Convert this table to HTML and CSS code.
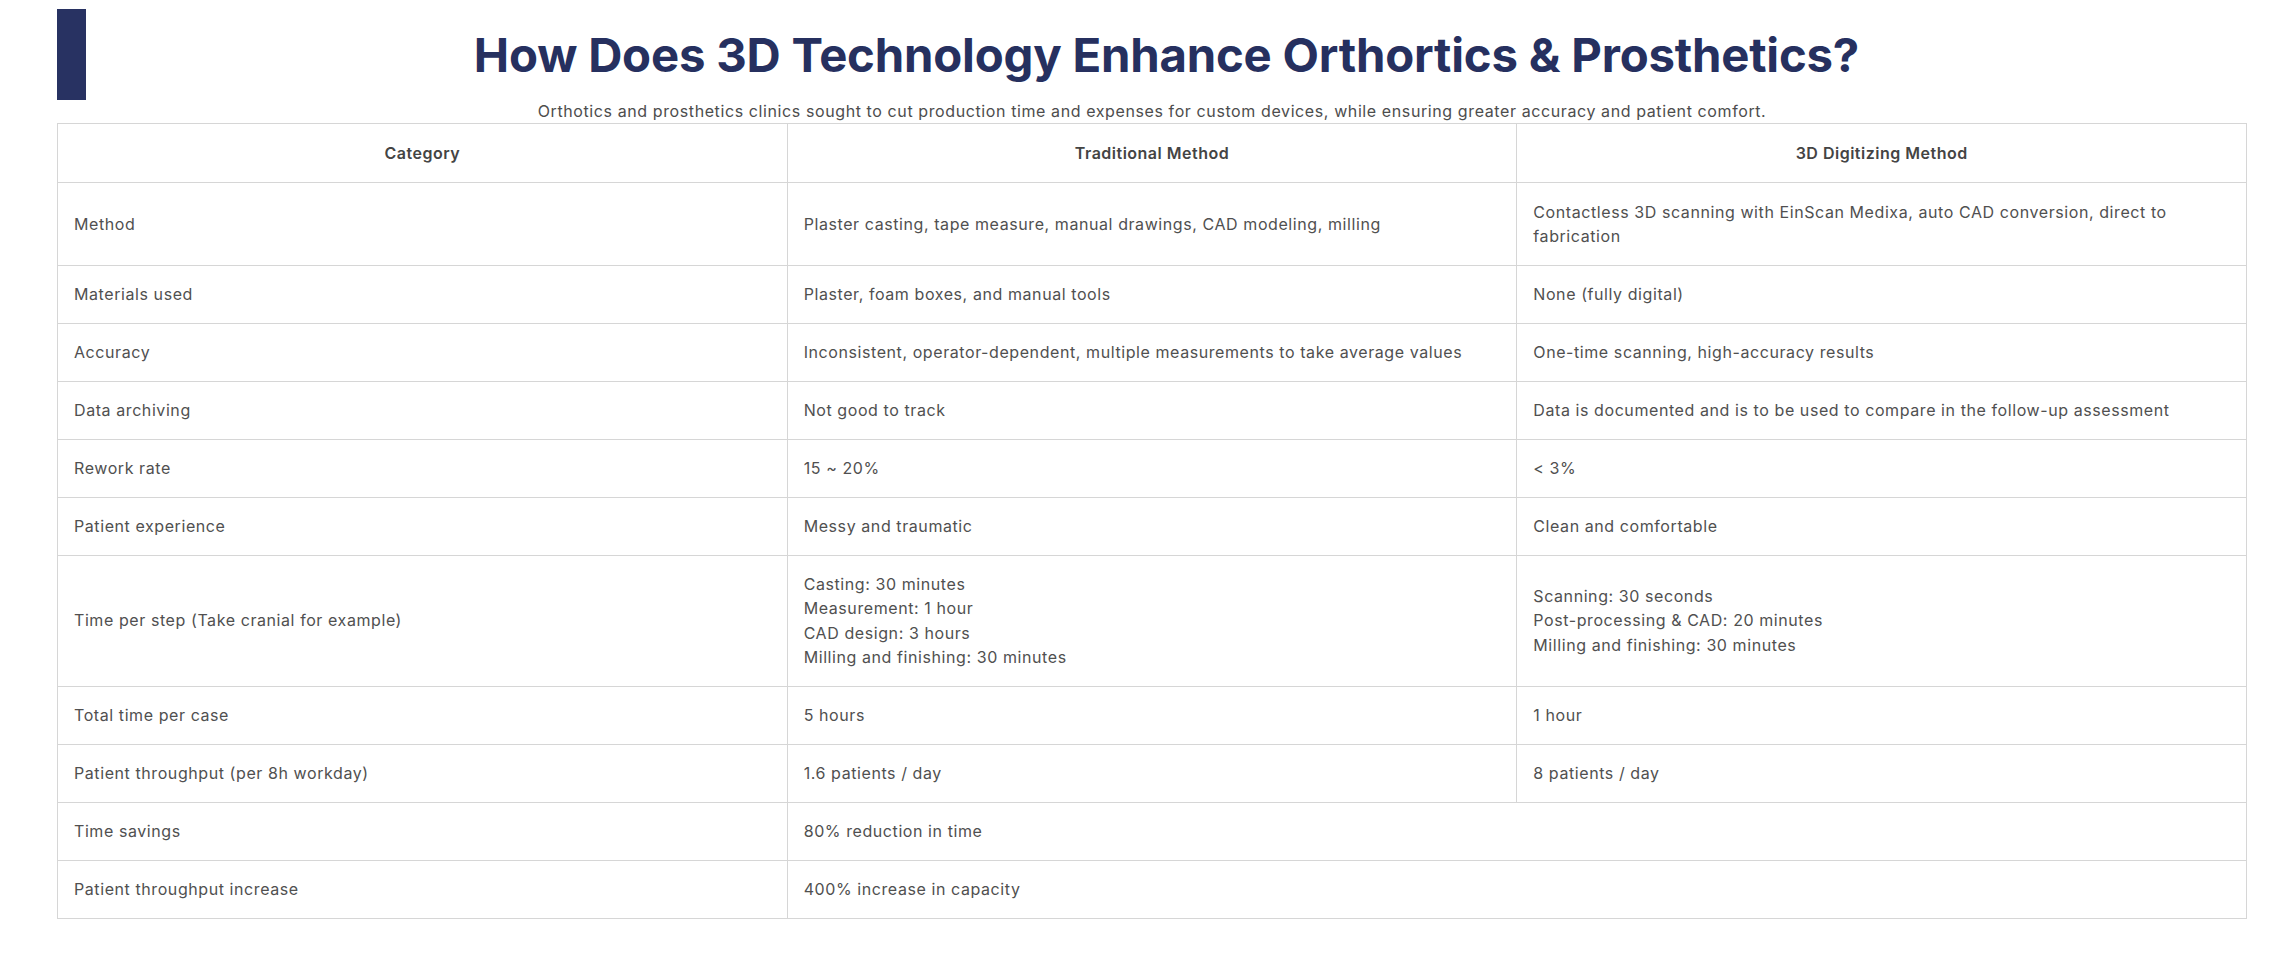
FILE: index.html
```html
<!DOCTYPE html>
<html lang="en">
<head>
<meta charset="utf-8">
<title>How Does 3D Technology Enhance Orthortics &amp; Prosthetics?</title>
<link rel="stylesheet" href="styles.css">
</head>
<body>
<div class="page">
  <div class="header">
    <div class="bar"></div>
    <h1 class="title">How Does 3D Technology Enhance Orthortics &amp; Prosthetics?</h1>
  </div>
  <p class="subtitle">Orthotics and prosthetics clinics sought to cut production time and expenses for custom devices, while ensuring greater accuracy and patient comfort.</p>
  <table class="compare">
    <thead>
      <tr><th>Category</th><th>Traditional Method</th><th>3D Digitizing Method</th></tr>
    </thead>
    <tbody>
      <tr><td>Method</td><td>Plaster casting, tape measure, manual drawings, CAD modeling, milling</td><td>Contactless 3D scanning with EinScan Medixa, auto CAD conversion, direct to fabrication</td></tr>
      <tr><td>Materials used</td><td>Plaster, foam boxes, and manual tools</td><td>None (fully digital)</td></tr>
      <tr><td>Accuracy</td><td>Inconsistent, operator-dependent, multiple measurements to take average values</td><td>One-time scanning, high-accuracy results</td></tr>
      <tr><td>Data archiving</td><td>Not good to track</td><td>Data is documented and is to be used to compare in the follow-up assessment</td></tr>
      <tr><td>Rework rate</td><td>15 ~ 20%</td><td>&lt; 3%</td></tr>
      <tr><td>Patient experience</td><td>Messy and traumatic</td><td>Clean and comfortable</td></tr>
      <tr><td>Time per step (Take cranial for example)</td><td>Casting: 30 minutes<br>Measurement: 1 hour<br>CAD design: 3 hours<br>Milling and finishing: 30 minutes</td><td>Scanning: 30 seconds<br>Post-processing &amp; CAD: 20 minutes<br>Milling and finishing: 30 minutes</td></tr>
      <tr><td>Total time per case</td><td>5 hours</td><td>1 hour</td></tr>
      <tr><td>Patient throughput (per 8h workday)</td><td>1.6 patients / day</td><td>8 patients / day</td></tr>
      <tr><td>Time savings</td><td colspan="2">80% reduction in time</td></tr>
      <tr><td>Patient throughput increase</td><td colspan="2">400% increase in capacity</td></tr>
    </tbody>
  </table>
</div>
</body>
</html>
```

FILE: styles.css
```css
html, body {
  margin: 0;
  padding: 0;
  background: #ffffff;
}

body {
  font-family: Inter, "Noto Sans", "Liberation Sans", sans-serif;
  color: #4a4a4a;
}

.page {
  padding: 9px 40px 0 57px;
}

.header {
  display: flex;
  align-items: center;
  height: 91px;
}

.bar {
  flex: 0 0 29px;
  height: 91px;
  background: #283262;
}

.title {
  flex: 1;
  margin: 0;
  text-align: center;
  font-size: 47.3px;
  font-weight: 700;
  line-height: 60px;
  color: #26305f;
  letter-spacing: -0.2px;
}

.subtitle {
  margin: 0;
  text-align: center;
  font-size: 16px;
  line-height: 22.5px;
  letter-spacing: 0.6px;
  color: #4d4d4d;
}

.compare {
  width: 100%;
  table-layout: fixed;
  border-collapse: collapse;
  border: 1px solid #d6d6d6;
  font-size: 16px;
  line-height: 24.33px;
  letter-spacing: 0.58px;
}

.compare th,
.compare td {
  border: 1px solid #d6d6d6;
  text-align: left;
  vertical-align: middle;
  padding: 16.33px 16px;
}

.compare th {
  text-align: center;
  font-weight: 600;
  color: #444444;
  padding: 17.3px 16px;
  letter-spacing: 0.5px;
}

.compare td {
  font-weight: 400;
  color: #505050;
}
```
